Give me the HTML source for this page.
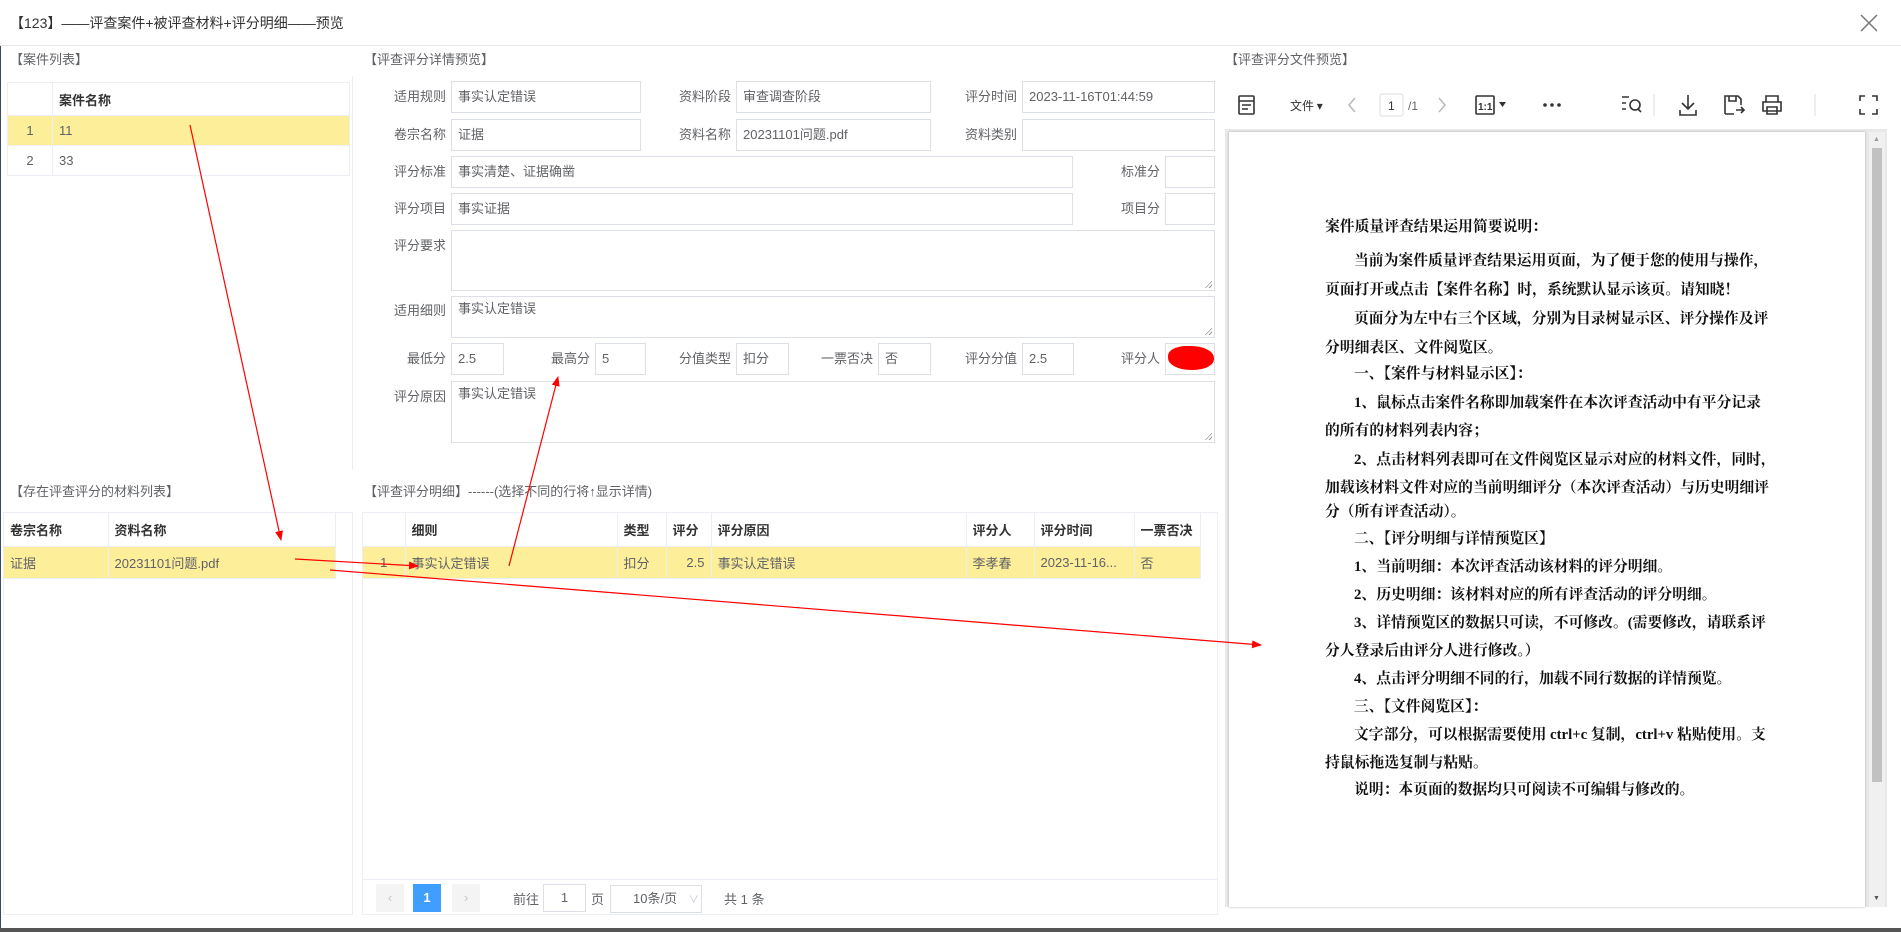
<!DOCTYPE html>
<html><head><meta charset="utf-8"><style>
*{box-sizing:border-box;margin:0;padding:0}
body{width:1901px;height:932px;position:relative;overflow:hidden;background:#fff;font-family:"Liberation Sans","Noto Sans CJK SC",sans-serif;font-size:13px;color:#606266}
.a{position:absolute}
.t{white-space:nowrap}
.lb{position:absolute;text-align:right;white-space:nowrap;line-height:32px;font-size:13px;color:#606266}
.in{position:absolute;border:1px solid #dcdfe6;background:#fff;padding:0 6px;line-height:30px;font-size:13px;color:#606266;white-space:nowrap}
.ta{line-height:20px;padding-top:2px}
.hd{font-size:13px;color:#606266}
table{border-collapse:collapse;position:absolute;font-size:13px}
td{white-space:nowrap;overflow:hidden;padding:0 6px;border-right:1px solid #ebeef5;border-bottom:1px solid #ebeef5}
.th td{font-weight:bold;color:#333}
.sel td{background:#fdee9a;color:#606266}
.doc div{position:absolute;white-space:nowrap;font-family:"Liberation Serif","Noto Serif CJK SC",serif;font-weight:bold;font-size:14.8px;color:#111;left:1325px}
.doc .i{left:1354px}
.rz{position:absolute;width:8px;height:8px;right:2px;bottom:2px;background:linear-gradient(135deg,transparent 55%,#999 55%,#999 62%,transparent 62%,transparent 78%,#999 78%,#999 85%,transparent 85%)}
</style></head><body>
<div class="a" style="left:0;top:0;width:1901px;height:46px;border-bottom:1px solid #e8e8e8"></div>
<div class="a t" style="left:10px;top:13px;font-size:14px;color:#303133">【123】——评查案件+被评查材料+评分明细——预览</div>
<svg class="a" style="left:1860px;top:14px" width="18" height="18"><path d="M1 1L17 17M17 1L1 17" stroke="#777" stroke-width="1.5"/></svg>
<div class="a" style="left:0;top:46px;width:1px;height:886px;background:#3a4a66"></div>
<div class="a" style="left:0;top:928px;width:1901px;height:4px;background:#555"></div>

<div class="a t hd" style="left:10px;top:49px">【案件列表】</div>
<div class="a t hd" style="left:364px;top:49px">【评查评分详情预览】</div>
<div class="a t hd" style="left:1225px;top:49px">【评查评分文件预览】</div>

<div class="a" style="left:352px;top:76px;width:1px;height:394px;background:#ebeef5"></div>
<table style="left:7px;top:82px;width:343px;border:1px solid #ebeef5">
<tr class="th" style="height:33px"><td style="width:45px"></td><td>案件名称</td></tr>
<tr class="sel" style="height:30px"><td style="text-align:center">1</td><td>11</td></tr>
<tr style="height:30px"><td style="text-align:center">2</td><td>33</td></tr>
</table>

<div class="lb" style="right:1455px;top:81px">适用规则</div><div class="in" style="left:451px;top:81px;width:190px;height:32px">事实认定错误</div>
<div class="lb" style="right:1170px;top:81px">资料阶段</div><div class="in" style="left:736px;top:81px;width:195px;height:32px">审查调查阶段</div>
<div class="lb" style="right:884px;top:81px">评分时间</div><div class="in" style="left:1022px;top:81px;width:193px;height:32px">2023-11-16T01:44:59</div>
<div class="lb" style="right:1455px;top:119px">卷宗名称</div><div class="in" style="left:451px;top:119px;width:190px;height:32px">证据</div>
<div class="lb" style="right:1170px;top:119px">资料名称</div><div class="in" style="left:736px;top:119px;width:195px;height:32px">20231101问题.pdf</div>
<div class="lb" style="right:884px;top:119px">资料类别</div><div class="in" style="left:1022px;top:119px;width:193px;height:32px"></div>
<div class="lb" style="right:1455px;top:156px">评分标准</div><div class="in" style="left:451px;top:156px;width:622px;height:32px">事实清楚、证据确凿</div>
<div class="lb" style="right:741px;top:156px">标准分</div><div class="in" style="left:1165px;top:156px;width:50px;height:32px"></div>
<div class="lb" style="right:1455px;top:193px">评分项目</div><div class="in" style="left:451px;top:193px;width:622px;height:32px">事实证据</div>
<div class="lb" style="right:741px;top:193px">项目分</div><div class="in" style="left:1165px;top:193px;width:50px;height:32px"></div>
<div class="lb" style="right:1455px;top:230px">评分要求</div><div class="in ta" style="left:451px;top:230px;width:764px;height:61px"><span class="rz"></span></div>
<div class="lb" style="right:1455px;top:295px">适用细则</div><div class="in ta" style="left:451px;top:296px;width:764px;height:42px">事实认定错误<span class="rz"></span></div>
<div class="lb" style="right:1455px;top:343px">最低分</div><div class="in" style="left:451px;top:343px;width:53px;height:32px">2.5</div>
<div class="lb" style="right:1311px;top:343px">最高分</div><div class="in" style="left:595px;top:343px;width:51px;height:32px">5</div>
<div class="lb" style="right:1170px;top:343px">分值类型</div><div class="in" style="left:736px;top:343px;width:53px;height:32px">扣分</div>
<div class="lb" style="right:1028px;top:343px">一票否决</div><div class="in" style="left:878px;top:343px;width:53px;height:32px">否</div>
<div class="lb" style="right:884px;top:343px">评分分值</div><div class="in" style="left:1022px;top:343px;width:52px;height:32px">2.5</div>
<div class="lb" style="right:741px;top:343px">评分人</div><div class="in" style="left:1165px;top:343px;width:50px;height:32px"></div>
<div class="a" style="left:1168px;top:346px;width:46px;height:24px;background:#f00;border-radius:40% 50% 45% 50%"></div>
<div class="lb" style="right:1455px;top:381px">评分原因</div><div class="in ta" style="left:451px;top:381px;width:764px;height:62px">事实认定错误<span class="rz"></span></div>

<div class="a t hd" style="left:10px;top:481px">【存在评查评分的材料列表】</div>
<div class="a t hd" style="left:364px;top:481px">【评查评分明细】------(选择不同的行将↑显示详情)</div>
<div class="a" style="left:3px;top:512px;width:350px;height:403px;border:1px solid #ebeef5"></div>
<table style="left:4px;top:513px;width:332px">
<tr class="th" style="height:33px"><td style="width:104px">卷宗名称</td><td>资料名称</td></tr>
<tr class="sel" style="height:32px"><td>证据</td><td>20231101问题.pdf</td></tr>
</table>
<div class="a" style="left:362px;top:512px;width:856px;height:403px;border:1px solid #ebeef5"></div>
<table style="left:363px;top:513px;width:838px">
<tr class="th" style="height:33px"><td style="width:42px"></td><td style="width:212px">细则</td><td style="width:49px">类型</td><td style="width:45px">评分</td><td style="width:255px">评分原因</td><td style="width:68px">评分人</td><td style="width:100px">评分时间</td><td>一票否决</td></tr>
<tr class="sel" style="height:32px"><td style="text-align:center">1</td><td>事实认定错误</td><td>扣分</td><td style="text-align:right">2.5</td><td>事实认定错误</td><td>李孝春</td><td>2023-11-16...</td><td>否</td></tr>
</table>
<div class="a" style="left:363px;top:879px;width:854px;height:1px;background:#ebeef5"></div>
<div class="a" style="left:376px;top:884px;width:28px;height:28px;background:#f4f4f5;color:#c0c4cc;text-align:center;line-height:28px">‹</div>
<div class="a" style="left:413px;top:884px;width:28px;height:28px;background:#409eff;color:#fff;text-align:center;line-height:28px;font-weight:bold">1</div>
<div class="a" style="left:452px;top:884px;width:28px;height:28px;background:#f4f4f5;color:#c0c4cc;text-align:center;line-height:28px">›</div>
<div class="a t" style="left:513px;top:889px">前往</div>
<div class="a" style="left:543px;top:884px;width:43px;height:28px;border:1px solid #dcdfe6;text-align:center;line-height:26px">1</div>
<div class="a t" style="left:591px;top:889px">页</div>
<div class="a" style="left:610px;top:885px;width:92px;height:28px;border:1px solid #dcdfe6;line-height:26px;padding-left:22px">10条/页 <span style="color:#c0c4cc;font-size:10px;margin-left:8px">∨</span></div>
<div class="a t" style="left:724px;top:889px">共 1 条</div>

<svg class="a" style="left:1225px;top:90px" width="676" height="30" fill="none" stroke="#333" stroke-width="1.6">
<rect x="14" y="6" width="15" height="18" rx="1"/><path d="M14 11h15M17 15h9M17 19h6"/>
<text x="65" y="20" fill="#333" stroke="none" font-size="12" font-family="Noto Sans CJK SC,sans-serif">文件 ▾</text>
<path d="M130 8l-6 7 6 7" stroke="#bbb"/>
<rect x="155" y="4" width="23" height="22" rx="2" stroke="#ddd" stroke-width="1"/>
<text x="163" y="20" fill="#333" stroke="none" font-size="12">1</text>
<text x="183" y="20" fill="#666" stroke="none" font-size="12">/1</text>
<path d="M214 8l6 7-6 7" stroke="#bbb"/>
<rect x="251" y="6" width="18" height="18" rx="1"/><text x="253" y="20" fill="#333" stroke="none" font-size="10" font-weight="bold">1:1</text>
<path d="M274 12h7l-3.5 5z" fill="#333" stroke="none"/>
<circle cx="320" cy="15" r="1.8" fill="#333" stroke="none"/><circle cx="327" cy="15" r="1.8" fill="#333" stroke="none"/><circle cx="334" cy="15" r="1.8" fill="#333" stroke="none"/>
<path d="M397 7h7M397 13h4M397 19h4"/><circle cx="410" cy="15" r="5"/><path d="M413 19l3 3"/>
<path d="M429 4v22" stroke="#ddd" stroke-width="1"/>
<path d="M463 5v14M457 13l6 6 6-6M455 20v5h16v-5"/>
<path d="M500 24v-18h13l3 3v6M504 6v5h7V6M511 20h8M516 17l3 3-3 3M500 24h9"/>
<path d="M541 12v-6h12v6M538 12h18v9h-18zM542 17h10v7h-10z"/>
<path d="M590 4v22" stroke="#ddd" stroke-width="1"/>
<path d="M635 11v-5h5M647 6h5v5M652 19v5h-5M640 24h-5v-5"/>
</svg>
<div class="a" style="left:1225px;top:129px;width:662px;height:778px;background:#e8e8e8"></div>
<div class="a" style="left:1229px;top:132px;width:636px;height:775px;background:#fff;box-shadow:0 0 2px #aaa"></div>
<div class="a" style="left:1869px;top:132px;width:16px;height:775px;background:#f0f0f0"></div>
<div class="a" style="left:1872px;top:148px;width:10px;height:634px;background:#c1c1c1"></div>
<div class="a" style="left:1873px;top:136px;font-size:7px;color:#999">▲</div>
<div class="a" style="left:1873px;top:895px;font-size:7px;color:#555">▼</div>
<div class="doc">
<div style="top:215px">案件质量评查结果运用简要说明：</div>
<div class="i" style="top:249px">当前为案件质量评查结果运用页面，为了便于您的使用与操作，</div>
<div style="top:278px">页面打开或点击【案件名称】时，系统默认显示该页。请知晓！</div>
<div class="i" style="top:307px">页面分为左中右三个区域，分别为目录树显示区、评分操作及评</div>
<div style="top:336px">分明细表区、文件阅览区。</div>
<div class="i" style="top:362px">一、【案件与材料显示区】：</div>
<div class="i" style="top:391px">1、鼠标点击案件名称即加载案件在本次评查活动中有平分记录</div>
<div style="top:419px">的所有的材料列表内容；</div>
<div class="i" style="top:448px">2、点击材料列表即可在文件阅览区显示对应的材料文件，同时，</div>
<div style="top:476px">加载该材料文件对应的当前明细评分（本次评查活动）与历史明细评</div>
<div style="top:500px">分（所有评查活动）。</div>
<div class="i" style="top:527px">二、【评分明细与详情预览区】</div>
<div class="i" style="top:555px">1、当前明细：本次评查活动该材料的评分明细。</div>
<div class="i" style="top:583px">2、历史明细：该材料对应的所有评查活动的评分明细。</div>
<div class="i" style="top:611px">3、详情预览区的数据只可读，不可修改。(需要修改，请联系评</div>
<div style="top:639px">分人登录后由评分人进行修改。）</div>
<div class="i" style="top:667px">4、点击评分明细不同的行，加载不同行数据的详情预览。</div>
<div class="i" style="top:695px">三、【文件阅览区】：</div>
<div class="i" style="top:723px">文字部分，可以根据需要使用 ctrl+c 复制，ctrl+v 粘贴使用。支</div>
<div style="top:751px">持鼠标拖选复制与粘贴。</div>
<div class="i" style="top:778px">说明：本页面的数据均只可阅读不可编辑与修改的。</div>
</div>

<svg class="a" style="left:0;top:0" width="1901" height="932">
<defs><marker id="m" markerWidth="10" markerHeight="8" refX="9" refY="4" orient="auto" markerUnits="userSpaceOnUse"><path d="M0 0L10 4L0 8z" fill="#f00"/></marker></defs>
<g stroke="#f00" stroke-width="1.2" fill="none" marker-end="url(#m)">
<path d="M190 125L281 540"/>
<path d="M509 566L558 377"/>
<path d="M295 559L418 566"/>
<path d="M330 570L1261 645"/>
</g></svg>
</body></html>
